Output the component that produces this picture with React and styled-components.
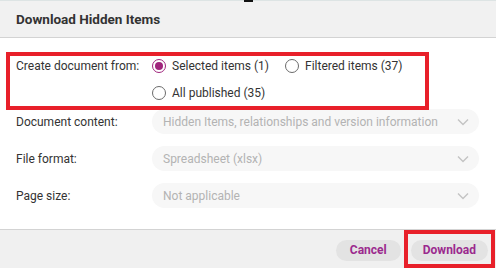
import React, { useState } from "react";
import styled, { createGlobalStyle } from "styled-components";

const Global = createGlobalStyle`
  html, body { margin: 0; padding: 0; background: #ffffff; }
  body { font-family: Roboto, "Liberation Sans", Arial, sans-serif; }
`;

const Dialog = styled.div`
  position: relative;
  width: 496px;
  height: 268px;
  display: flex;
  flex-direction: column;
  background: #ffffff;
  overflow: hidden;
`;

const Header = styled.div`
  height: 36px;
  flex: none;
  display: flex;
  align-items: center;
  padding: 0 16px;
  background: #f1f1f1;
  border-top: 1px solid #dde4e4;
  border-bottom: 1px solid #d3d3d3;
  h1 {
    margin: 0;
    font-size: 13.5px;
    font-weight: 700;
    color: #333333;
  }
`;

const Marker = styled.span`
  position: absolute;
  top: 0;
  left: 244px;
  width: 9px;
  height: 2px;
  background: #111111;
`;

const Body = styled.div`
  flex: 1;
  padding: 14px 17px 0 6px;
  display: flex;
  flex-direction: column;
`;

const Highlight = styled.div`
  border: 4px solid #e8202a;
  width: 409px;
  padding: 0 0 3px 6px;
  margin-bottom: -1px;
  position: relative;
  z-index: 1;
  display: grid;
  grid-template-columns: 136px 1fr;
`;

const Label = styled.div`
  font-size: 12px;
  color: #333333;
  height: 20px;
  display: flex;
  align-items: center;
  white-space: nowrap;
`;

const Options = styled.div`
  display: flex;
  flex-wrap: wrap;
  row-gap: 7px;
  column-gap: 16px;
`;

const RadioLabel = styled.label`
  display: flex;
  align-items: center;
  gap: 6px;
  height: 20px;
  font-size: 12px;
  color: #333333;
  cursor: pointer;
  white-space: nowrap;
  input { display: none; }
`;

const Circle = styled.span`
  box-sizing: border-box;
  width: 14px;
  height: 14px;
  border-radius: 50%;
  border: 1px solid ${(p) => (p.$on ? "#a0247c" : "#6b6b6b")};
  display: flex;
  align-items: center;
  justify-content: center;
  background: #fff;
  &::after {
    content: "";
    width: 8px;
    height: 8px;
    border-radius: 50%;
    background: ${(p) => (p.$on ? "#a0247c" : "transparent")};
  }
`;

const Row = styled.div`
  display: grid;
  grid-template-columns: 136px 1fr;
  align-items: center;
  padding-left: 10px;
  margin-bottom: 12px;
`;

const Select = styled.div`
  height: 25px;
  border-radius: 13px;
  background: #f7f7f7;
  display: flex;
  align-items: center;
  justify-content: space-between;
  padding: 0 10px 0 11px;
  font-size: 12px;
  color: #b3b3b3;
  white-space: nowrap;
  overflow: hidden;
`;

const Footer = styled.div`
  height: 38px;
  flex: none;
  background: #f0f0f0;
  border-top: 1px solid #d3d3d3;
  display: flex;
  justify-content: flex-end;
  align-items: flex-start;
  padding-right: 1px;
`;

const Button = styled.button`
  height: 21px;
  border: none;
  border-radius: 11px;
  background: #e3e3e3;
  color: #9b2a8e;
  font-family: Roboto, "Liberation Sans", Arial, sans-serif;
  font-size: 12px;
  font-weight: 700;
  padding: 0 ${(p) => p.$pad}px;
  cursor: pointer;
`;

const CancelWrap = styled.div`
  padding-top: 9px;
  margin-right: 3px;
`;

const DownloadBox = styled.div`
  height: 38px;
  box-sizing: border-box;
  border: 4px solid #e8202a;
  padding: 5px 3px 0;
`;

const Chevron = () => (
  <svg width="12" height="8" viewBox="0 0 12 8">
    <path d="M1 1.5 L6 6.5 L11 1.5" fill="none" stroke="#c4c4c4" strokeWidth="1.4" />
  </svg>
);

const options = [
  { id: "selected", text: "Selected items (1)" },
  { id: "filtered", text: "Filtered items (37)" },
  { id: "all", text: "All published (35)" },
];

const fields = [
  { label: "Document content:", value: "Hidden Items, relationships and version information" },
  { label: "File format:", value: "Spreadsheet (xlsx)" },
  { label: "Page size:", value: "Not applicable" },
];

export default function App() {
  const [source, setSource] = useState("selected");

  return (
    <>
      <Global />
      <Dialog>
        <Marker />
        <Header>
          <h1>Download Hidden Items</h1>
        </Header>
        <Body>
          <Highlight>
            <Label>Create document from:</Label>
            <Options>
              {options.map((o) => (
                <RadioLabel key={o.id}>
                  <input type="radio" checked={source === o.id} onChange={() => setSource(o.id)} />
                  <Circle $on={source === o.id} />
                  {o.text}
                </RadioLabel>
              ))}
            </Options>
          </Highlight>
          {fields.map((f) => (
            <Row key={f.label}>
              <Label>{f.label}</Label>
              <Select>
                <span>{f.value}</span>
                <Chevron />
              </Select>
            </Row>
          ))}
        </Body>
        <Footer>
          <CancelWrap>
            <Button $pad={14}>Cancel</Button>
          </CancelWrap>
          <DownloadBox>
            <Button $pad={12}>Download</Button>
          </DownloadBox>
        </Footer>
      </Dialog>
    </>
  );
}
